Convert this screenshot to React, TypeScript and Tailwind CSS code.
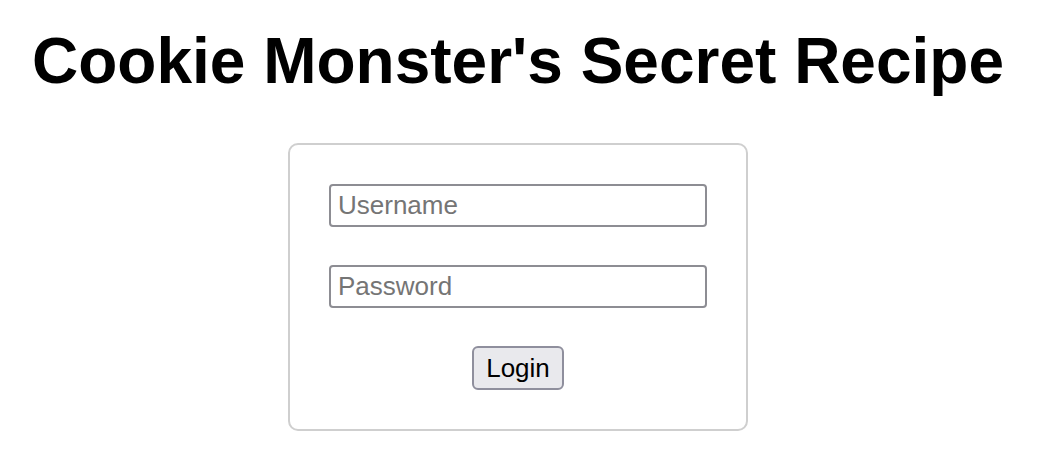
import React from "react";

const App: React.FC = () => {
  return (
    <div className="flex flex-col items-center w-[1036px] bg-white font-['Liberation_Sans',Arial,sans-serif]">
      <h1 className="mt-[24px] text-[64px] leading-[74px] font-bold text-black">
        Cookie Monster's Secret Recipe
      </h1>

      <div className="mt-[45px] w-[460px] flex flex-col items-center gap-[38px] p-[39px] border-2 border-[#cfcfcf] rounded-[10px]">
        <input
          type="text"
          placeholder="Username"
          className="w-[378px] h-[43px] px-[7px] text-[26px] border-2 border-[#8d8d93] rounded-[4px] outline-none placeholder:text-[#757575]"
        />
        <input
          type="password"
          placeholder="Password"
          className="w-[378px] h-[43px] px-[7px] text-[26px] border-2 border-[#8d8d93] rounded-[4px] outline-none placeholder:text-[#757575]"
        />
        <button className="w-[92px] h-[44px] text-[26px] text-black bg-[#e9e9ed] border-2 border-[#8f8f9d] rounded-[6px]">
          Login
        </button>
      </div>
    </div>
  );
};

export default App;
